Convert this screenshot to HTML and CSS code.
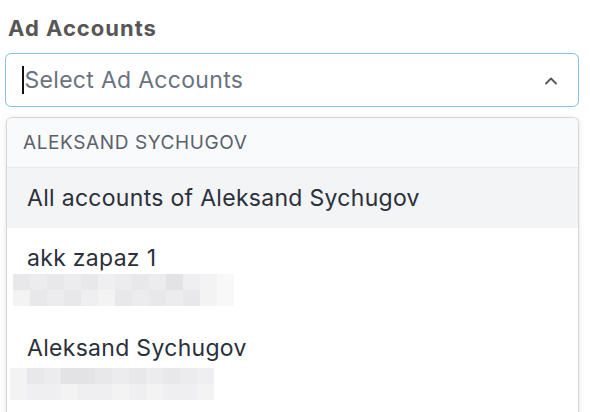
FILE: index.html
```html
<!DOCTYPE html>
<html lang="en">
<head>
<meta charset="utf-8">
<title>Ad Accounts</title>
<link rel="stylesheet" href="styles.css">
</head>
<body>
<div class="field">
  <label class="label">Ad Accounts</label>
  <div class="select">
    <span class="caret"></span>
    <span class="placeholder">Select Ad Accounts</span>
    <svg class="chevron" width="14" height="9" viewBox="0 0 14 9"><path d="M2 7.5 L7 2.5 L12 7.5" fill="none" stroke="#555" stroke-width="1.8" stroke-linecap="round" stroke-linejoin="round"/></svg>
  </div>
  <div class="menu">
    <div class="group">Aleksand Sychugov</div>
    <div class="option active">All accounts of Aleksand Sychugov</div>
    <div class="option account">
      <div class="name">akk zapaz 1</div>
      <div class="blur b1">
        <div class="brow"><i class="c2"></i><i class="c3"></i><i class="c2"></i><i class="c3"></i><i class="c2"></i><i class="c4"></i><i class="c3"></i><i class="c2"></i><i class="c3"></i><i class="c1"></i><i class="c4"></i><i class="c5"></i><i class="c6"></i></div>
        <div class="brow"><i class="c5"></i><i class="c2"></i><i class="c3"></i><i class="c2"></i><i class="c4"></i><i class="c5"></i><i class="c2"></i><i class="c3"></i><i class="c2"></i><i class="c3"></i><i class="c2"></i><i class="c5"></i><i class="c6"></i></div>
      </div>
    </div>
    <div class="option account">
      <div class="name">Aleksand Sychugov</div>
      <div class="blur b2">
        <div class="brow"><i class="c5"></i><i class="c2"></i><i class="c3"></i><i class="c1"></i><i class="c1"></i><i class="c2"></i><i class="c3"></i><i class="c2"></i><i class="c3"></i><i class="c2"></i><i class="c3"></i><i class="c4"></i></div>
        <div class="brow"><i class="c5"></i><i class="c4"></i><i class="c4"></i><i class="c5"></i><i class="c4"></i><i class="c4"></i><i class="c5"></i><i class="c4"></i><i class="c5"></i><i class="c4"></i><i class="c4"></i><i class="c5"></i></div>
      </div>
    </div>
  </div>
</div>
</body>
</html>
```
FILE: styles.css
```css
html, body {
  margin: 0;
  padding: 0;
  background: #ffffff;
  overflow: hidden;
}
body {
  font-family: Inter, "Noto Sans", "Liberation Sans", sans-serif;
  width: 590px;
  height: 412px;
}
.field {
  padding: 14px 11px 0 5px;
  display: flex;
  flex-direction: column;
}
.label {
  font-size: 22px;
  font-weight: 700;
  letter-spacing: 1px;
  color: #575757;
  line-height: 28px;
  margin-left: 3px;
  margin-bottom: 11px;
}
.select {
  height: 52px;
  border: 1.5px solid #8fbbe9;
  border-radius: 6px;
  display: flex;
  align-items: center;
  padding-left: 16px;
  padding-right: 20px;
}
.caret {
  width: 1.5px;
  height: 28px;
  background: #111;
  margin-right: 1px;
}
.placeholder {
  font-size: 23px;
  letter-spacing: 0.3px;
  color: #6b7280;
  flex: 1;
}
.chevron {
  display: block;
}
.menu {
  margin-top: 10px;
  border: 1px solid #d6d6d6;
  border-bottom: none;
  border-radius: 6px 6px 0 0;
  box-shadow: 0 1px 6px rgba(0,0,0,0.10);
  margin-left: 1px;
  overflow: hidden;
  height: 300px;
}
.group {
  height: 49px;
  display: flex;
  align-items: center;
  padding-left: 16px;
  background: #f9fafb;
  border-bottom: 1px solid #e5e7eb;
  text-transform: uppercase;
  font-size: 19px;
  letter-spacing: 0.6px;
  color: #5b616b;
}
.option {
  padding-left: 20px;
  font-size: 23px;
  letter-spacing: 0.3px;
  color: #2b303b;
}
.active {
  height: 60px;
  display: flex;
  align-items: center;
  background: #f3f4f6;
}
.account {
  height: 90px;
  padding-top: 15px;
  box-sizing: border-box;
}
.name {
  line-height: 30px;
}
.blur {
  display: flex;
  flex-direction: column;
  margin-top: 1px;
  filter: blur(0.6px);
}
.b1 { margin-left: -14px; }
.b2 { margin-left: -17px; margin-top: 5px; }
.brow {
  display: flex;
  height: 16px;
}
.brow i {
  display: block;
  width: 17px;
  height: 16px;
}
.c1 { background: #e3e3e5; }
.c2 { background: #e8e8ea; }
.c3 { background: #ececee; }
.c4 { background: #efeff1; }
.c5 { background: #f3f3f4; }
.c6 { background: #f8f8f9; }
```
